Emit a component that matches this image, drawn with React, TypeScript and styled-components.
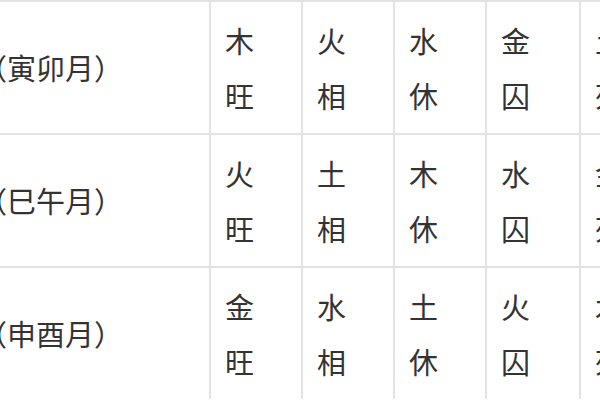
import { Fragment } from 'react';
import styled, { createGlobalStyle } from 'styled-components';

const GlobalStyle = createGlobalStyle`
  html, body {
    margin: 0;
    padding: 0;
    background: #ffffff;
  }
  body {
    width: 600px;
    height: 400px;
    overflow: hidden;
    font-family: "Noto Sans CJK SC", "Noto Sans", sans-serif;
  }
`;

const Viewport = styled.div`
  width: 600px;
  height: 400px;
  overflow: hidden;
  background: #ffffff;
`;

/* grid lines come from the gap showing the background through */
const Table = styled.div`
  display: grid;
  grid-template-columns: 305px 90px 90px 90px 92px 90px;
  grid-auto-rows: 131px;
  gap: 2px;
  padding-top: 2px;
  margin-left: -96px;
  width: max-content;
  background: #e2e2e2;
`;

const Cell = styled.div`
  background: #ffffff;
  display: flex;
  flex-direction: column;
  justify-content: center;
  padding-left: 14px;
  color: #333333;
  font-size: 29px;
  line-height: 55px;
`;

const SeasonCell = styled(Cell)`
  padding-left: 16px;
  white-space: nowrap;
`;

interface Row {
  season: string;
  phases: [string, string][];
}

const ROWS: Row[] = [
  {
    season: '春季（寅卯月）',
    phases: [['木', '旺'], ['火', '相'], ['水', '休'], ['金', '囚'], ['土', '死']],
  },
  {
    season: '夏季（巳午月）',
    phases: [['火', '旺'], ['土', '相'], ['木', '休'], ['水', '囚'], ['金', '死']],
  },
  {
    season: '秋季（申酉月）',
    phases: [['金', '旺'], ['水', '相'], ['土', '休'], ['火', '囚'], ['木', '死']],
  },
];

export default function App() {
  return (
    <Viewport>
      <GlobalStyle />
      <Table>
        {ROWS.map((row) => (
          <Fragment key={row.season}>
            <SeasonCell>{row.season}</SeasonCell>
            {row.phases.map(([el, state]) => (
              <Cell key={row.season + el}>
                <span>{el}</span>
                <span>{state}</span>
              </Cell>
            ))}
          </Fragment>
        ))}
      </Table>
    </Viewport>
  );
}
